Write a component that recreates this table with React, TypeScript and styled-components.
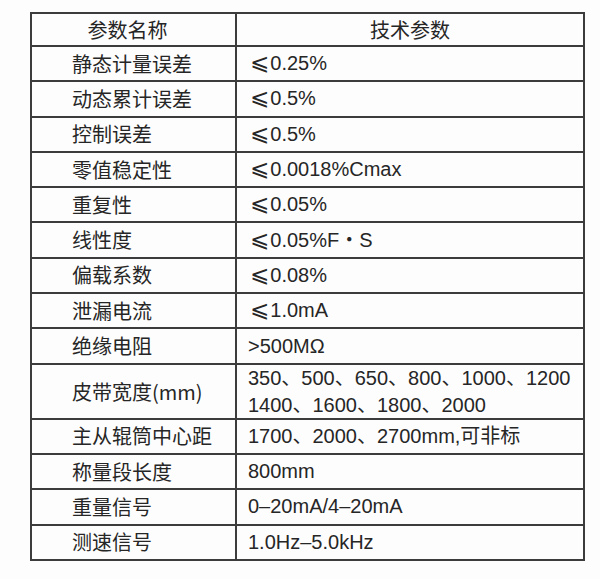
import React from "react";
import styled, { createGlobalStyle } from "styled-components";

const Global = createGlobalStyle`
  html, body { margin: 0; padding: 0; background: #ffffff; }
  body { font-family: "Liberation Sans", "Noto Sans CJK SC", sans-serif; }
`;

const Page = styled.div`
  width: 600px;
  height: 579px;
  box-sizing: border-box;
  padding: 12px 0 0 30px;
  background: #fdfdfd;
`;

const Table = styled.div`
  width: 555px;
  border: 2px solid #3c3c3c;
  box-sizing: border-box;
  display: flex;
  flex-direction: column;
  color: #262626;
`;

const Row = styled.div<{ $h: number; $first?: boolean }>`
  display: grid;
  grid-template-columns: 205px 1fr;
  height: ${(p) => p.$h}px;
  border-top: ${(p) => (p.$first ? "none" : "2px solid #3c3c3c")};
  box-sizing: border-box;
`;

const NameCell = styled.div<{ $head?: boolean }>`
  border-right: 2px solid #3c3c3c;
  display: flex;
  align-items: center;
  justify-content: ${(p) => (p.$head ? "center" : "flex-start")};
  padding: ${(p) => (p.$head ? "0 12px 0 0" : "0 0 0 40px")};
  font-family: "Noto Sans CJK SC", sans-serif;
  font-size: 20px;
  line-height: 1;
  white-space: nowrap;
`;

const ValueCell = styled.div<{ $head?: boolean }>`
  display: flex;
  flex-direction: column;
  justify-content: center;
  align-items: ${(p) => (p.$head ? "center" : "flex-start")};
  padding-left: ${(p) => (p.$head ? "0" : "11px")};
  font-family: ${(p) =>
    p.$head ? `"Noto Sans CJK SC", sans-serif` : `"Liberation Sans", "Noto Sans CJK SC", sans-serif`};
  font-size: 20px;
  line-height: 27px;
  white-space: nowrap;
`;

const Le = styled.span`
  display: inline-block;
  font-family: "DejaVu Sans", sans-serif;
  font-size: 23px;
  line-height: 0;
  margin-left: 2px;
  margin-right: 1px;
`;

type Item = { name: string; value: React.ReactNode[]; h?: number; le?: boolean };

const rows: Item[] = [
  { name: "静态计量误差", value: ["0.25%"], le: true },
  { name: "动态累计误差", value: ["0.5%"], le: true },
  { name: "控制误差", value: ["0.5%"], le: true },
  { name: "零值稳定性", value: ["0.0018%Cmax"], le: true },
  { name: "重复性", value: ["0.05%"], le: true },
  { name: "线性度", value: ["0.05%F・S"], le: true },
  { name: "偏载系数", value: ["0.08%"], le: true },
  { name: "泄漏电流", value: ["1.0mA"], le: true },
  { name: "绝缘电阻", value: [">500MΩ"] },
  {
    name: "皮带宽度(mm)",
    value: ["350、500、650、800、1000、1200", "1400、1600、1800、2000"],
    h: 55,
  },
  { name: "主从辊筒中心距", value: ["1700、2000、2700mm,可非标"] },
  { name: "称量段长度", value: ["800mm"] },
  { name: "重量信号", value: ["0–20mA/4–20mA"] },
  { name: "测速信号", value: ["1.0Hz–5.0kHz"] },
];

export default function App() {
  return (
    <>
      <Global />
      <Page>
        <Table>
          <Row $h={31} $first>
            <NameCell $head>参数名称</NameCell>
            <ValueCell $head>技术参数</ValueCell>
          </Row>
          {rows.map((r) => (
            <Row key={r.name} $h={r.h ?? 35.3}>
              <NameCell>{r.name}</NameCell>
              <ValueCell>
                {r.value.map((line, i) => (
                  <div key={i}>
                    {r.le && <Le>⩽</Le>}
                    {line}
                  </div>
                ))}
              </ValueCell>
            </Row>
          ))}
        </Table>
      </Page>
    </>
  );
}
